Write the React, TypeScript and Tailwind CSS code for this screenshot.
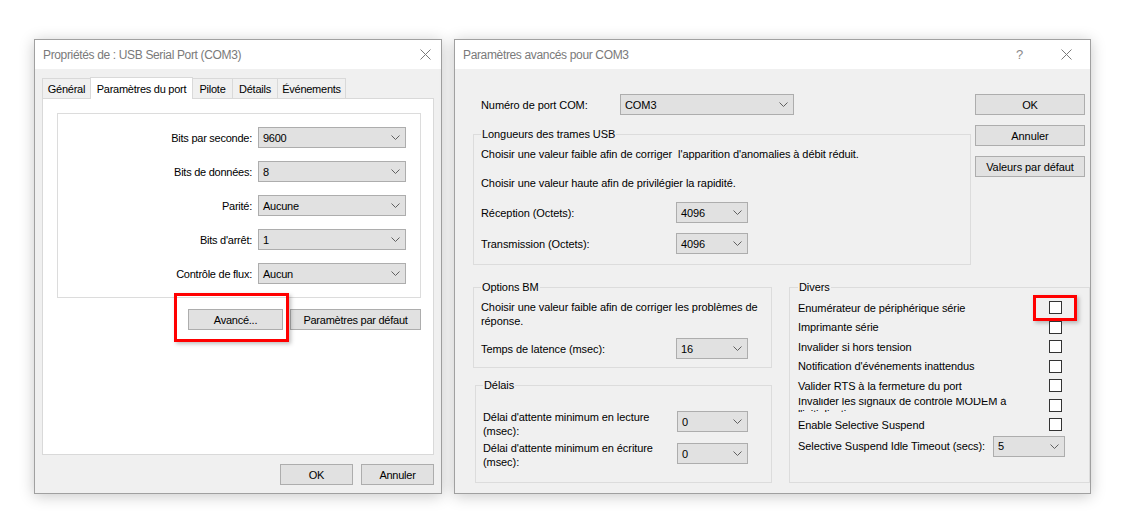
import type { ReactNode } from "react";

const Chevron = () => (
  <svg width="9" height="5" viewBox="0 0 9 5" className="shrink-0">
    <path d="M0.5 0.5 L4.5 4.5 L8.5 0.5" stroke="#606060" fill="none" strokeWidth="1" />
  </svg>
);

const CloseIcon = () => (
  <svg width="11" height="11" viewBox="0 0 11 11">
    <path d="M0.5 0.5 L10.5 10.5 M10.5 0.5 L0.5 10.5" stroke="#7a7a7a" strokeWidth="1" fill="none" />
  </svg>
);

const Select = ({ value, className }: { value: string; className: string }) => (
  <div
    className={`flex items-center justify-between h-[21px] bg-[#e1e1e1] border border-[#adadad] pl-[4px] pr-[5px] ${className}`}
  >
    <span>{value}</span>
    <Chevron />
  </div>
);

const Btn = ({ children, className }: { children: ReactNode; className: string }) => (
  <div
    className={`flex items-center justify-center h-[21px] bg-[#e1e1e1] border border-[#adadad] ${className}`}
  >
    {children}
  </div>
);

const Checkbox = () => <div className="w-[13px] h-[13px] bg-white border border-[#333]" />;

const TitleBar = ({ title, help }: { title: string; help?: boolean }) => (
  <div className="h-[29px] shrink-0 bg-white flex items-center justify-between pl-[8px] text-[12px] text-[#7a7a7a] tracking-[-0.35px]">
    <span>{title}</span>
    {help ? (
      <div className="flex items-center gap-[38px] pr-[18px]">
        <span className="text-[13px] text-[#8a8a8a]">?</span>
        <CloseIcon />
      </div>
    ) : (
      <div className="pr-[10px] flex items-center">
        <CloseIcon />
      </div>
    )}
  </div>
);

const portRows = [
  ["Bits par seconde:", "9600"],
  ["Bits de données:", "8"],
  ["Parité:", "Aucune"],
  ["Bits d'arrêt:", "1"],
  ["Contrôle de flux:", "Aucun"],
];

const diversRows = [
  "Enumérateur de périphérique série",
  "Imprimante série",
  "Invalider si hors tension",
  "Notification d'événements inattendus",
  "Valider RTS à la fermeture du port",
];

const PortProperties = () => (
  <div className="absolute left-[34px] top-[39px] w-[408px] h-[455px] flex flex-col border border-[#a0a0a0] bg-[#f0f0f0] shadow-[0_2px_14px_rgba(0,0,0,0.22)] tracking-[-0.25px]">
    <TitleBar title="Propriétés de : USB Serial Port (COM3)" />
    <div className="flex-1 flex flex-col px-[7px]">
      {/* tabs */}
      <div className="mt-[8px] h-[21px] flex items-end">
        <div className="h-[20px] w-[49px] flex items-center justify-center border border-b-0 border-[#d9d9d9]">
          Général
        </div>
        <div className="relative z-10 -mb-px h-[22px] w-[103px] flex items-center justify-center bg-white border border-b-0 border-[#d9d9d9] -ml-px">
          Paramètres du port
        </div>
        <div className="h-[20px] w-[40px] flex items-center justify-center border-t border-r border-[#d9d9d9]">
          Pilote
        </div>
        <div className="h-[20px] w-[45px] flex items-center justify-center border-t border-r border-[#d9d9d9]">
          Détails
        </div>
        <div className="h-[20px] w-[68px] flex items-center justify-center border-t border-r border-[#d9d9d9]">
          Événements
        </div>
      </div>

      <div className="flex-1 flex flex-col bg-white border border-[#d9d9d9]">
        <div className="mt-[14px] ml-[14px] mr-[12px] border border-[#dcdcdc] pt-[13px] pb-[13px] pr-[14px] flex flex-col gap-[13px]">
          {portRows.map(([label, value]) => (
            <div key={label} className="flex items-center h-[21px]">
              <span className="w-[194px] text-right">{label}</span>
              <Select value={value} className="ml-[6px] w-[148px]" />
            </div>
          ))}
        </div>
        <div className="mt-[11px] mr-[12px] flex justify-end gap-[7px]">
          <div className="relative">
            <Btn className="w-[95px]">Avancé...</Btn>
            <div className="absolute left-[-14px] top-[-16px] w-[115px] h-[49px] border-[3px] border-[#ff0000] shadow-[2px_2px_4px_rgba(0,0,0,0.25)]" />
          </div>
          <Btn className="w-[131px]">Paramètres par défaut</Btn>
        </div>
      </div>

      <div className="mt-[9px] mb-[8px] flex justify-end gap-[8px]">
        <Btn className="w-[73px]">OK</Btn>
        <Btn className="w-[73px]">Annuler</Btn>
      </div>
    </div>
  </div>
);

const AdvancedSettings = () => (
  <div className="absolute left-[454px] top-[39px] w-[637px] h-[455px] flex flex-col border border-[#a0a0a0] bg-[#f0f0f0] overflow-hidden shadow-[0_2px_14px_rgba(0,0,0,0.22)] tracking-[-0.08px]">
    <TitleBar title="Paramètres avancés pour COM3" help />
    <div className="flex-1 flex flex-col pl-[18px]">
      <div className="flex">
        <div className="w-[498px]">
          <div className="mt-[25px] h-[21px] flex items-center pl-[8px]">
            <span className="w-[139px]">Numéro de port COM:</span>
            <Select value="COM3" className="w-[174px]" />
          </div>

          <fieldset className="mt-[12px] border border-[#dcdcdc] pl-[7px] pb-[10px]">
            <legend className="px-[1px]">Longueurs des trames USB</legend>
            <p className="mt-[6px] whitespace-pre">
              Choisir une valeur faible afin de corriger  l'apparition d'anomalies à débit réduit.
            </p>
            <p className="mt-[15px]">Choisir une valeur haute afin de privilégier la rapidité.</p>
            <div className="mt-[12px] h-[21px] flex items-center">
              <span className="w-[195px]">Réception (Octets):</span>
              <Select value="4096" className="w-[72px]" />
            </div>
            <div className="mt-[10px] h-[21px] flex items-center">
              <span className="w-[195px]">Transmission (Octets):</span>
              <Select value="4096" className="w-[72px]" />
            </div>
          </fieldset>
        </div>

        <div className="ml-[4px] mt-[25px] w-[110px] flex flex-col gap-[10px]">
          <Btn className="w-full">OK</Btn>
          <Btn className="w-full">Annuler</Btn>
          <Btn className="w-full">Valeurs par défaut</Btn>
        </div>
      </div>

      <div className="mt-[15px] flex">
        <div className="w-[300px] flex flex-col">
          <fieldset className="border border-[#dcdcdc] pl-[7px] pr-[8px] pb-[8px]">
            <legend className="px-[1px]">Options BM</legend>
            <p className="mt-[6px]">Choisir une valeur faible afin de corriger les problèmes de réponse.</p>
            <div className="mt-[10px] h-[21px] flex items-center">
              <span className="w-[195px]">Temps de latence (msec):</span>
              <Select value="16" className="w-[72px]" />
            </div>
          </fieldset>

          <fieldset className="mt-[10px] ml-[2px] border border-[#dcdcdc] pl-[7px] pb-[13px]">
            <legend className="px-[1px]">Délais</legend>
            <div className="mt-[18px] flex items-start">
              <span className="w-[194px]">
                Délai d'attente minimum en lecture
                <br />
                (msec):
              </span>
              <Select value="0" className="mt-[1px] w-[71px]" />
            </div>
            <div className="mt-[3px] flex items-start">
              <span className="w-[194px]">
                Délai d'attente minimum en écriture
                <br />
                (msec):
              </span>
              <Select value="0" className="mt-[2px] w-[71px]" />
            </div>
          </fieldset>
        </div>

        <fieldset className="ml-[17px] w-[302px] border border-[#dcdcdc] pl-[8px]">
          <legend className="px-[1px]">Divers</legend>
          <div className="mt-[4px] flex flex-col">
            {diversRows.map((label, i) => (
              <div key={label} className="h-[19.5px] flex items-center">
                <span className="w-[251px]">{label}</span>
                <div className="relative">
                  <Checkbox />
                  {i === 0 && (
                    <div className="absolute left-[-16px] top-[-6px] w-[44px] h-[26px] border-[3px] border-[#ff0000] shadow-[2px_2px_4px_rgba(0,0,0,0.25)]" />
                  )}
                </div>
              </div>
            ))}
            <div className="h-[19.5px] flex items-center">
              <div className="w-[251px] h-[14px] overflow-hidden">
                <p className="-mt-[3px] leading-[13px]">
                  Invalider les signaux de contrôle MODEM à
                  <br />
                  l'initialisation
                </p>
              </div>
              <Checkbox />
            </div>
            <div className="h-[19.5px] flex items-center">
              <span className="w-[251px]">Enable Selective Suspend</span>
              <Checkbox />
            </div>
            <div className="mt-[1px] h-[21px] flex items-center">
              <span className="w-[195px]">Selective Suspend Idle Timeout (secs):</span>
              <Select value="5" className="w-[72px]" />
            </div>
          </div>
        </fieldset>
      </div>
    </div>
  </div>
);

export default function App() {
  return (
    <div className="relative w-[1130px] h-[529px] overflow-hidden bg-white text-black text-[11px] leading-[14px] font-['Liberation_Sans',Arial,sans-serif]">
      <PortProperties />
      <AdvancedSettings />
    </div>
  );
}
